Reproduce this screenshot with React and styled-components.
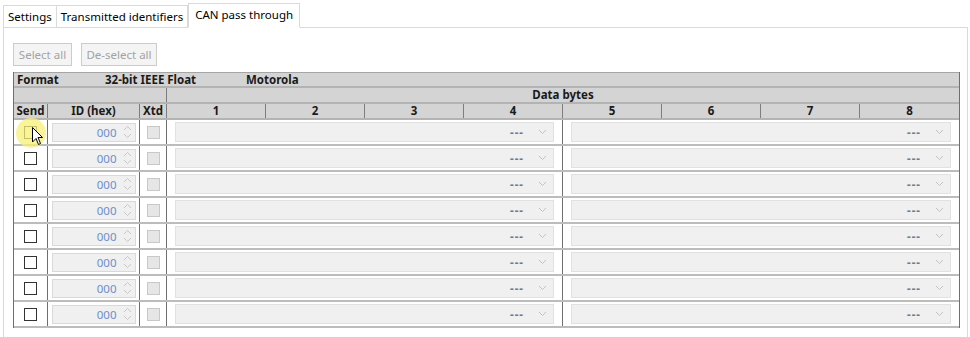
import React from "react";
import styled, { createGlobalStyle } from "styled-components";

const GlobalStyle = createGlobalStyle`
  body {
    margin: 0;
    background: #ffffff;
    font-family: "Noto Sans", "Open Sans", sans-serif;
    font-size: 11.5px;
    color: #000;
  }
`;

const Page = styled.div`
  width: 970px;
  height: 337px;
  overflow: hidden;
  padding: 2px 2px 0 3px;
  box-sizing: border-box;
`;

const TabStrip = styled.div`
  display: flex;
  align-items: flex-end;
  height: 25px;
  position: relative;
  z-index: 1;
`;

const Tab = styled.div`
  height: ${(p) => (p.active ? "25px" : "22px")};
  padding: 0 ${(p) => (p.active ? "6px" : "4px")};
  margin-bottom: ${(p) => (p.active ? "-1px" : "0")};
  border: 1px solid #d9d9d9;
  border-bottom: ${(p) => (p.active ? "1px solid #fff" : "none")};
  border-left: ${(p) => (p.first || p.active ? "1px solid #d9d9d9" : "none")};
  background: #fff;
  box-sizing: border-box;
  display: flex;
  align-items: center;
  white-space: nowrap;
  padding-bottom: ${(p) => (p.active ? "3px" : "0")};
`;

const Panel = styled.div`
  border: 1px solid #d9d9d9;
  border-bottom: none;
  height: 320px;
  box-sizing: border-box;
  padding: 15px 9px 0 9px;
`;

const Toolbar = styled.div`
  display: flex;
  gap: 9px;
  margin-bottom: 6px;
`;

const Button = styled.button`
  height: 23px;
  width: ${(p) => p.w}px;
  border: 1px solid #cccccc;
  background: #f4f4f4;
  color: #a3a3a3;
  font-family: inherit;
  font-size: 11.5px;
  padding: 0;
`;

const Table = styled.div`
  width: 945px;
  border-left: 1px solid #6f6f6f;
  border-right: 1px solid #6f6f6f;
  position: relative;
`;

const cols = "34px 92px 27px repeat(8, 1fr)";

const HeadRow = styled.div`
  display: grid;
  grid-template-columns: ${cols};
  height: ${(p) => (p.top ? "13px" : "14px")};
  background: #d4d4d4;
  border-top: ${(p) => (p.top ? "1px solid #a5a5a5" : "none")};
  border-bottom: 2px solid #b3b3b3;
  font-weight: 700;
  color: #1a1a1a;
`;

const InfoRow = styled(HeadRow)`
  display: flex;
  align-items: center;
  padding-left: 3px;
`;

const InfoText = styled.span`
  width: ${(p) => p.w}px;
  line-height: 13px;
`;

const HeadCell = styled.div`
  grid-column: span ${(p) => p.span || 1};
  border-right: ${(p) => (p.last ? "none" : "1px solid #7d7d7d")};
  display: flex;
  align-items: center;
  justify-content: center;
  line-height: 14px;
`;

const DataRow = styled.div`
  display: grid;
  grid-template-columns: ${cols};
  height: 24px;
  border-bottom: 2px solid #bcbcbc;
  align-items: stretch;
`;

const Cell = styled.div`
  grid-column: span ${(p) => p.span || 1};
  border-right: ${(p) => (p.last ? "none" : "1px solid #6f6f6f")};
  display: flex;
  align-items: center;
  justify-content: center;
  padding: 0 ${(p) => p.pad || 0}px;
`;

const Check = styled.div`
  width: 11px;
  height: 11px;
  border: 1px solid ${(p) => (p.disabled ? "#c8c8c8" : "#333")};
  background: ${(p) => (p.disabled ? "#e6e6e6" : "#fff")};
`;

const Spin = styled.div`
  width: 84px;
  height: 19px;
  box-sizing: border-box;
  border: 1px solid #d9d9d9;
  background: #f0f0f0;
  display: flex;
  align-items: center;
  justify-content: flex-end;
  color: #6d8fc9;
  padding-right: 3px;
`;

const SpinArrows = styled.svg`
  margin-left: 6px;
`;

const Combo = styled.div`
  flex: 1;
  height: 20px;
  box-sizing: border-box;
  border: 1px solid #e1e1e1;
  background: #f0f0f0;
  display: flex;
  align-items: center;
  justify-content: flex-end;
  padding-right: 6px;
  color: #6f7b8f;
  font-weight: 700;
  letter-spacing: 1px;
`;

const Highlight = styled.div`
  position: absolute;
  left: 2px;
  top: 46px;
  width: 30px;
  height: 30px;
  border-radius: 50%;
  background: rgba(247, 240, 120, 0.75);
  pointer-events: none;
`;

const Pointer = styled.svg`
  position: absolute;
  left: 18px;
  top: 55px;
`;

const Chevron = () => (
  <svg width="9" height="6" viewBox="0 0 9 6" style={{ marginLeft: 14 }}>
    <path d="M1 1 L4.5 4.5 L8 1" fill="none" stroke="#c2c2c2" strokeWidth="1" />
  </svg>
);

const Arrows = () => (
  <SpinArrows width="9" height="16" viewBox="0 0 9 16">
    <path d="M1 6 L4.5 2.5 L8 6" fill="none" stroke="#c8c8c8" strokeWidth="1" />
    <path d="M1 10 L4.5 13.5 L8 10" fill="none" stroke="#c8c8c8" strokeWidth="1" />
  </SpinArrows>
);

const rows = Array.from({ length: 8 }, (_, i) => i);

export default function App() {
  return (
    <>
      <GlobalStyle />
      <Page>
        <TabStrip>
          <Tab first>Settings</Tab>
          <Tab>Transmitted identifiers</Tab>
          <Tab active>CAN pass through</Tab>
        </TabStrip>
        <Panel>
          <Toolbar>
            <Button w={59}>Select all</Button>
            <Button w={76}>De-select all</Button>
          </Toolbar>
          <Table>
            <InfoRow top>
              <InfoText w={88}>Format</InfoText>
              <InfoText w={141}>32-bit IEEE Float</InfoText>
              <InfoText w={80}>Motorola</InfoText>
            </InfoRow>
            <HeadRow>
              <HeadCell span={3} />
              <HeadCell span={8} last>
                Data bytes
              </HeadCell>
            </HeadRow>
            <HeadRow>
              <HeadCell>Send</HeadCell>
              <HeadCell>ID (hex)</HeadCell>
              <HeadCell>Xtd</HeadCell>
              {[1, 2, 3, 4, 5, 6, 7, 8].map((n) => (
                <HeadCell key={n} last={n === 8}>
                  {n}
                </HeadCell>
              ))}
            </HeadRow>
            {rows.map((i) => (
              <DataRow key={i}>
                <Cell>
                  <Check />
                </Cell>
                <Cell>
                  <Spin>
                    000
                    <Arrows />
                  </Spin>
                </Cell>
                <Cell>
                  <Check disabled />
                </Cell>
                <Cell span={4} pad={8}>
                  <Combo>
                    ---
                    <Chevron />
                  </Combo>
                </Cell>
                <Cell span={4} pad={8} last>
                  <Combo>
                    ---
                    <Chevron />
                  </Combo>
                </Cell>
              </DataRow>
            ))}
            <Highlight />
            <Pointer width="12" height="19" viewBox="0 0 12 19">
              <path
                d="M0.5 0.5 L0.5 15 L4 11.5 L6.5 17.5 L8.5 16.5 L6 10.5 L10.5 10.5 Z"
                fill="#fff"
                stroke="#000"
                strokeWidth="1"
              />
            </Pointer>
          </Table>
        </Panel>
      </Page>
    </>
  );
}
